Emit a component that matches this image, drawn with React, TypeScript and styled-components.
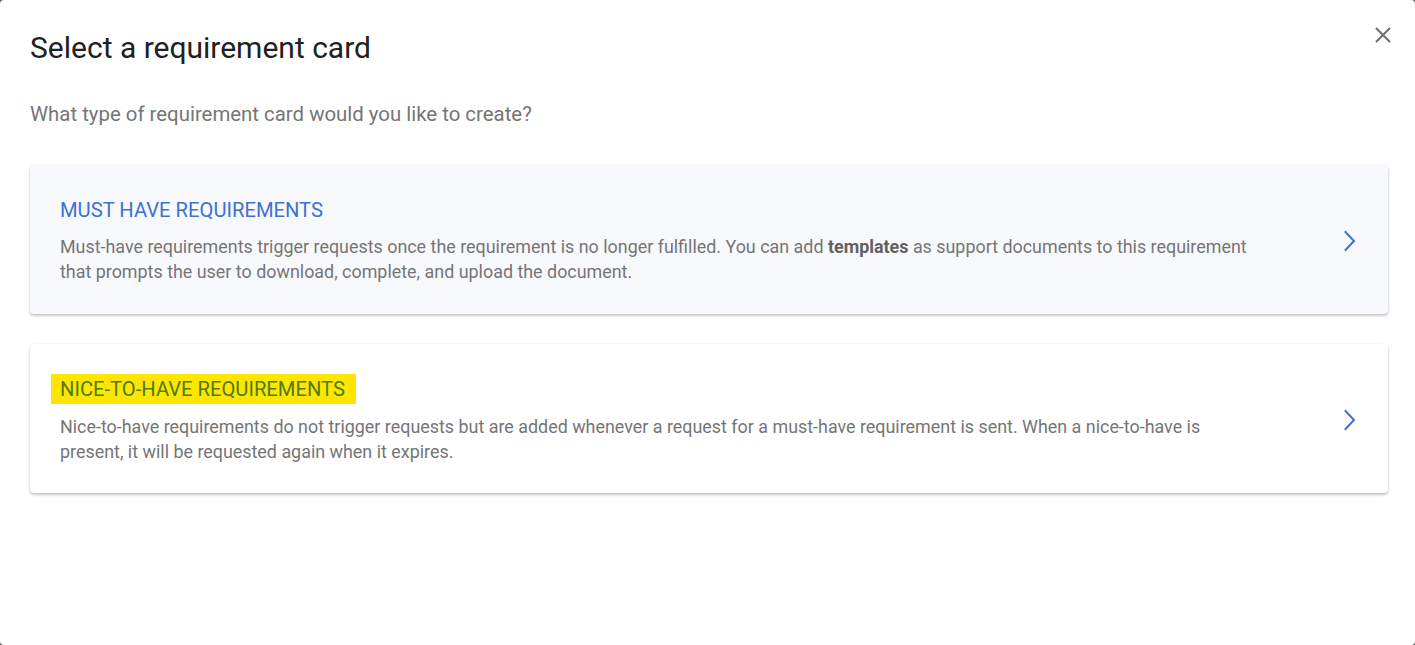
import React from 'react'
import styled, { createGlobalStyle } from 'styled-components'

const GlobalStyle = createGlobalStyle`
  html, body {
    margin: 0;
    padding: 0;
    background: #5f5f5f;
  }
  * {
    box-sizing: border-box;
  }
`

const Dialog = styled.div`
  position: relative;
  width: 1415px;
  height: 645px;
  background: #ffffff;
  border-radius: 4px;
  padding: 28px 27px 0 30px;
  font-family: Roboto, 'Noto Sans', sans-serif;
  overflow: hidden;
`

const Title = styled.h1`
  margin: 0;
  font-size: 30px;
  font-weight: 400;
  line-height: 40px;
  color: #212121;
`

const Subtitle = styled.p`
  margin: 34px 0 0;
  font-size: 20.4px;
  line-height: 24px;
  color: #757575;
`

const CloseButton = styled.button`
  position: absolute;
  top: 23px;
  right: 20px;
  width: 24px;
  height: 24px;
  padding: 0;
  border: none;
  background: transparent;
  display: flex;
  align-items: center;
  justify-content: center;
  cursor: pointer;
`

const CardList = styled.div`
  display: flex;
  flex-direction: column;
  gap: 30px;
  margin-top: 39px;
`

const Card = styled.div<{ $tinted?: boolean }>`
  display: flex;
  align-items: center;
  min-height: 149px;
  padding: 32px 28px 29px 30px;
  border-radius: 4px;
  background: ${(p) => (p.$tinted ? '#f8f9fd' : '#ffffff')};
  box-shadow: 0 2px 3px rgba(0, 0, 0, 0.22), 0 0 2px rgba(0, 0, 0, 0.08);
  cursor: pointer;
`

const CardBody = styled.div`
  width: 1200px;
  display: flex;
  flex-direction: column;
  align-items: flex-start;
`

const CardTitle = styled.h2<{ $highlight?: boolean }>`
  margin: ${(p) => (p.$highlight ? '-2px 0 10px -9px' : '0 0 12px 0')};
  padding: ${(p) => (p.$highlight ? '0 11px 0 9px' : '0')};
  font-size: 20.2px;
  font-weight: 400;
  line-height: ${(p) => (p.$highlight ? '30px' : '24px')};
  color: ${(p) => (p.$highlight ? '#4f7a0c' : '#3f70d4')};
  background: ${(p) => (p.$highlight ? '#ffe600' : 'transparent')};
`

const CardText = styled.p`
  margin: 0;
  font-size: 17.9px;
  line-height: 25px;
  color: #757575;

  strong {
    font-weight: 700;
    color: #616161;
  }
`

const Chevron = styled.div`
  margin-left: auto;
  width: 20px;
  height: 24px;
  display: flex;
  align-items: center;
  justify-content: center;
`

const ChevronIcon = () => (
  <svg width="14" height="22" viewBox="0 0 14 22" fill="none">
    <path d="M2.5 2 L11 11 L2.5 20" stroke="#3f70d4" strokeWidth="2" strokeLinecap="square" />
  </svg>
)

const CloseIcon = () => (
  <svg width="18" height="18" viewBox="0 0 18 18" fill="none">
    <path d="M2 2 L16 16 M16 2 L2 16" stroke="#6f6f6f" strokeWidth="2" />
  </svg>
)

const cards = [
  {
    key: 'must',
    title: 'MUST HAVE REQUIREMENTS',
    tinted: true,
    highlight: false,
    text: (
      <>
        Must-have requirements trigger requests once the requirement is no longer fulfilled. You can add{' '}
        <strong>templates</strong> as support documents to this requirement that prompts the user to
        download, complete, and upload the document.
      </>
    ),
  },
  {
    key: 'nice',
    title: 'NICE-TO-HAVE REQUIREMENTS',
    tinted: false,
    highlight: true,
    text: (
      <>
        Nice-to-have requirements do not trigger requests but are added whenever a request for a
        must-have requirement is sent. When a nice-to-have is present, it will be requested again when it
        expires.
      </>
    ),
  },
]

export default function App() {
  return (
    <>
      <GlobalStyle />
      <Dialog>
        <CloseButton aria-label="Close">
          <CloseIcon />
        </CloseButton>
        <Title>Select a requirement card</Title>
        <Subtitle>What type of requirement card would you like to create?</Subtitle>
        <CardList>
          {cards.map((c) => (
            <Card key={c.key} $tinted={c.tinted}>
              <CardBody>
                <CardTitle $highlight={c.highlight}>{c.title}</CardTitle>
                <CardText>{c.text}</CardText>
              </CardBody>
              <Chevron>
                <ChevronIcon />
              </Chevron>
            </Card>
          ))}
        </CardList>
      </Dialog>
    </>
  )
}
